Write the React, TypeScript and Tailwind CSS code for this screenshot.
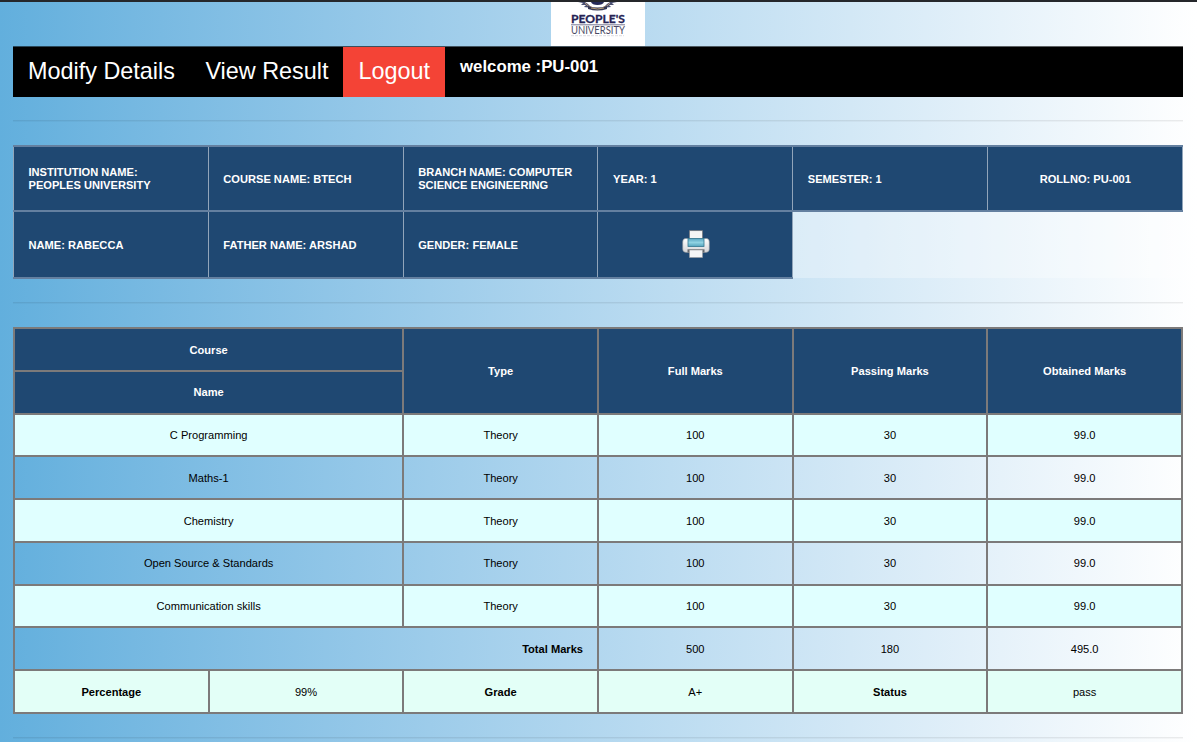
import type { ReactNode } from 'react';

const subjects = ['C Programming', 'Maths-1', 'Chemistry', 'Open Source & Standards', 'Communication skills'];

function Rule({ className }: { className: string }) {
  return <div className={`h-0.5 border-t border-t-black/[0.07] border-b border-b-black/[0.03] ${className}`} />;
}

function Info({ children, className = 'pt-px' }: { children: ReactNode; className?: string }) {
  return (
    <td className={`border-x border-y-2 border-x-[#91a5ba] border-y-[#6480a0] bg-[#1f4872] bg-clip-padding pr-3.5 pb-0 pl-[14.5px] align-middle ${className}`}>
      {children}
    </td>
  );
}

function Cell({
  children,
  className = '',
  colSpan,
  rowSpan,
  low = false,
}: {
  children: ReactNode;
  className?: string;
  colSpan?: number;
  rowSpan?: number;
  low?: boolean;
}) {
  return (
    <td
      colSpan={colSpan}
      rowSpan={rowSpan}
      className={`border-2 border-[#7c7a7a] px-3.5 align-middle ${low ? 'pt-[2.5px] pb-[0.5px]' : 'pt-0.5 pb-px'} ${className}`}
    >
      {children}
    </td>
  );
}

function Logo() {
  return (
    <svg viewBox="0 0 94 44" className="block h-11 w-[94px] bg-white">
      <path d="M27 0L32 1L30 3L35 3L33 5L41 6L37 2L34 0ZM66 0L61 1L63 3L58 3L60 5L52 6L56 2L59 0Z" fill="#4a5072" />
      <path d="M34 1Q37 5 41 5M59 1Q56 5 52 5" fill="none" stroke="#d0a878" strokeWidth="0.800" />
      <path d="M40 0H53Q52 3 46.500 3T40 0Z" fill="#252a59" />
      <path d="M37 4Q46.500 7 56 4V7Q46.500 10 37 7Z" fill="#343754" />
      <path d="M40 6Q46.500 8 53 6" fill="none" stroke="#d9b77c" strokeWidth="0.800" />
      <text x="20" y="21" textLength="54" lengthAdjust="spacingAndGlyphs" fill="#252354" stroke="#252354" strokeWidth="0.300" className="font-['Lato',sans-serif] text-[12px] font-bold">PEOPLE'S</text>
      <path d="M20 22.800H74" stroke="#555577" strokeWidth="0.800" />
      <text x="20" y="32" textLength="54" lengthAdjust="spacingAndGlyphs" fill="#4a4a65" className="font-['Lato',sans-serif] text-[10.5px]">UNIVERSITY</text>
      <path d="M20 33.700H73" stroke="#c4c4cc" strokeWidth="0.600" strokeDasharray="3 1" />
    </svg>
  );
}

function Printer() {
  return (
    <svg viewBox="0 0 28 29" className="mx-auto block h-[29px] w-7">
      <defs>
        <linearGradient id="body" x1="0" y1="0" x2="0" y2="1">
          <stop offset="0" stopColor="#ffffff" />
          <stop offset="1" stopColor="#d4d4d7" />
        </linearGradient>
        <linearGradient id="glass" x1="0" y1="0" x2="0" y2="1">
          <stop offset="0" stopColor="#58a4c1" />
          <stop offset="0.500" stopColor="#90d2e2" />
          <stop offset="1" stopColor="#55a5be" />
        </linearGradient>
      </defs>
      <rect x="7.500" y="0.700" width="13" height="11" fill="#f5f5f5" stroke="#77797c" strokeWidth="0.700" />
      <path d="M3.500 8.500H24.500Q27.300 8.500 27.300 12V19Q27.300 22.500 23 22.500H5Q0.700 22.500 0.700 19V12Q0.700 8.500 3.500 8.500Z" fill="url(#body)" stroke="#8c9299" strokeWidth="0.600" />
      <rect x="6" y="8.500" width="16" height="8" fill="url(#glass)" stroke="#347790" strokeWidth="0.800" />
      <path d="M5.500 19.300H22.500V22.500H5.500Z" fill="#66696d" />
      <path d="M7.500 20H20.500V27.500H7.500Z" fill="#f6f6f6" stroke="#9a9c9f" strokeWidth="0.600" />
    </svg>
  );
}

export default function App() {
  return (
    <div className="flex h-[742px] w-[1197px] flex-col overflow-hidden bg-linear-to-r from-[#62afdd] to-white font-['Liberation_Sans',Arial,sans-serif] text-black">
      <div className="h-0.5 shrink-0 bg-[#25272b]" />
      <div className="flex shrink-0 flex-col px-[13px] pr-3.5">
        <header className="flex h-11 justify-center">
          <Logo />
        </header>
        <nav className="flex h-[51px] border-t border-black/60 bg-black bg-clip-padding text-white">
          <a className="flex items-center pr-[15.5px] pl-[15px] text-[23.4px] whitespace-nowrap">Modify Details</a>
          <a className="flex items-center px-[15px] text-[23.4px] whitespace-nowrap">View Result</a>
          <a className="flex items-center bg-[#f44336] px-[15px] text-[23.4px] whitespace-nowrap">Logout</a>
          <strong className="pt-2 pl-[15px] text-[16.8px] leading-6">welcome :PU-001</strong>
        </nav>
        <Rule className="mt-[23px]" />
        <table className="mt-[23px] h-[134px] w-full table-fixed border-collapse text-[11.1px] leading-[13px] font-bold text-white">
          <tbody>
            <tr className="h-[65px]">
              <Info>INSTITUTION NAME:<br />PEOPLES UNIVERSITY</Info>
              <Info>COURSE NAME: BTECH</Info>
              <Info>BRANCH NAME: COMPUTER SCIENCE ENGINEERING</Info>
              <Info>YEAR: 1</Info>
              <Info>SEMESTER: 1</Info>
              <Info className="pt-px text-center">ROLLNO: PU-001</Info>
            </tr>
            <tr className="h-[67px]">
              <Info>NAME: RABECCA</Info>
              <Info>FATHER NAME: ARSHAD</Info>
              <Info>GENDER: FEMALE</Info>
              <Info className="pt-0"><Printer /></Info>
              <td colSpan={2} className="bg-white/30" />
            </tr>
          </tbody>
        </table>
        <Rule className="mt-[23px]" />
        <table className="mt-[23px] h-[387px] w-full table-fixed border-collapse text-center text-[11.1px] leading-[13px]">
          <colgroup>
            <col /><col /><col /><col /><col /><col />
          </colgroup>
          <tbody>
            <tr className="bg-[#1f4872] font-bold text-white">
              <Cell colSpan={2} low>Course</Cell>
              <Cell rowSpan={2}>Type</Cell>
              <Cell rowSpan={2}>Full Marks</Cell>
              <Cell rowSpan={2}>Passing Marks</Cell>
              <Cell rowSpan={2}>Obtained Marks</Cell>
            </tr>
            <tr className="bg-[#1f4872] font-bold text-white">
              <Cell colSpan={2}>Name</Cell>
            </tr>
            {subjects.map((name, i) => (
              <tr key={name} className={i % 2 === 0 ? 'bg-[#e0ffff]' : ''}>
                <Cell colSpan={2} low={i === 2}>{name}</Cell>
                <Cell low={i === 2}>Theory</Cell>
                <Cell low={i === 2}>100</Cell>
                <Cell low={i === 2}>30</Cell>
                <Cell low={i === 2}>99.0</Cell>
              </tr>
            ))}
            <tr>
              <Cell colSpan={3} className="text-right font-bold">Total Marks</Cell>
              <Cell>500</Cell>
              <Cell>180</Cell>
              <Cell>495.0</Cell>
            </tr>
            <tr className="bg-[#e3fff7]">
              <Cell className="font-bold">Percentage</Cell>
              <Cell>99%</Cell>
              <Cell className="font-bold">Grade</Cell>
              <Cell>A+</Cell>
              <Cell className="font-bold">Status</Cell>
              <Cell>pass</Cell>
            </tr>
          </tbody>
        </table>
        <Rule className="mt-[23px]" />
      </div>
    </div>
  );
}
